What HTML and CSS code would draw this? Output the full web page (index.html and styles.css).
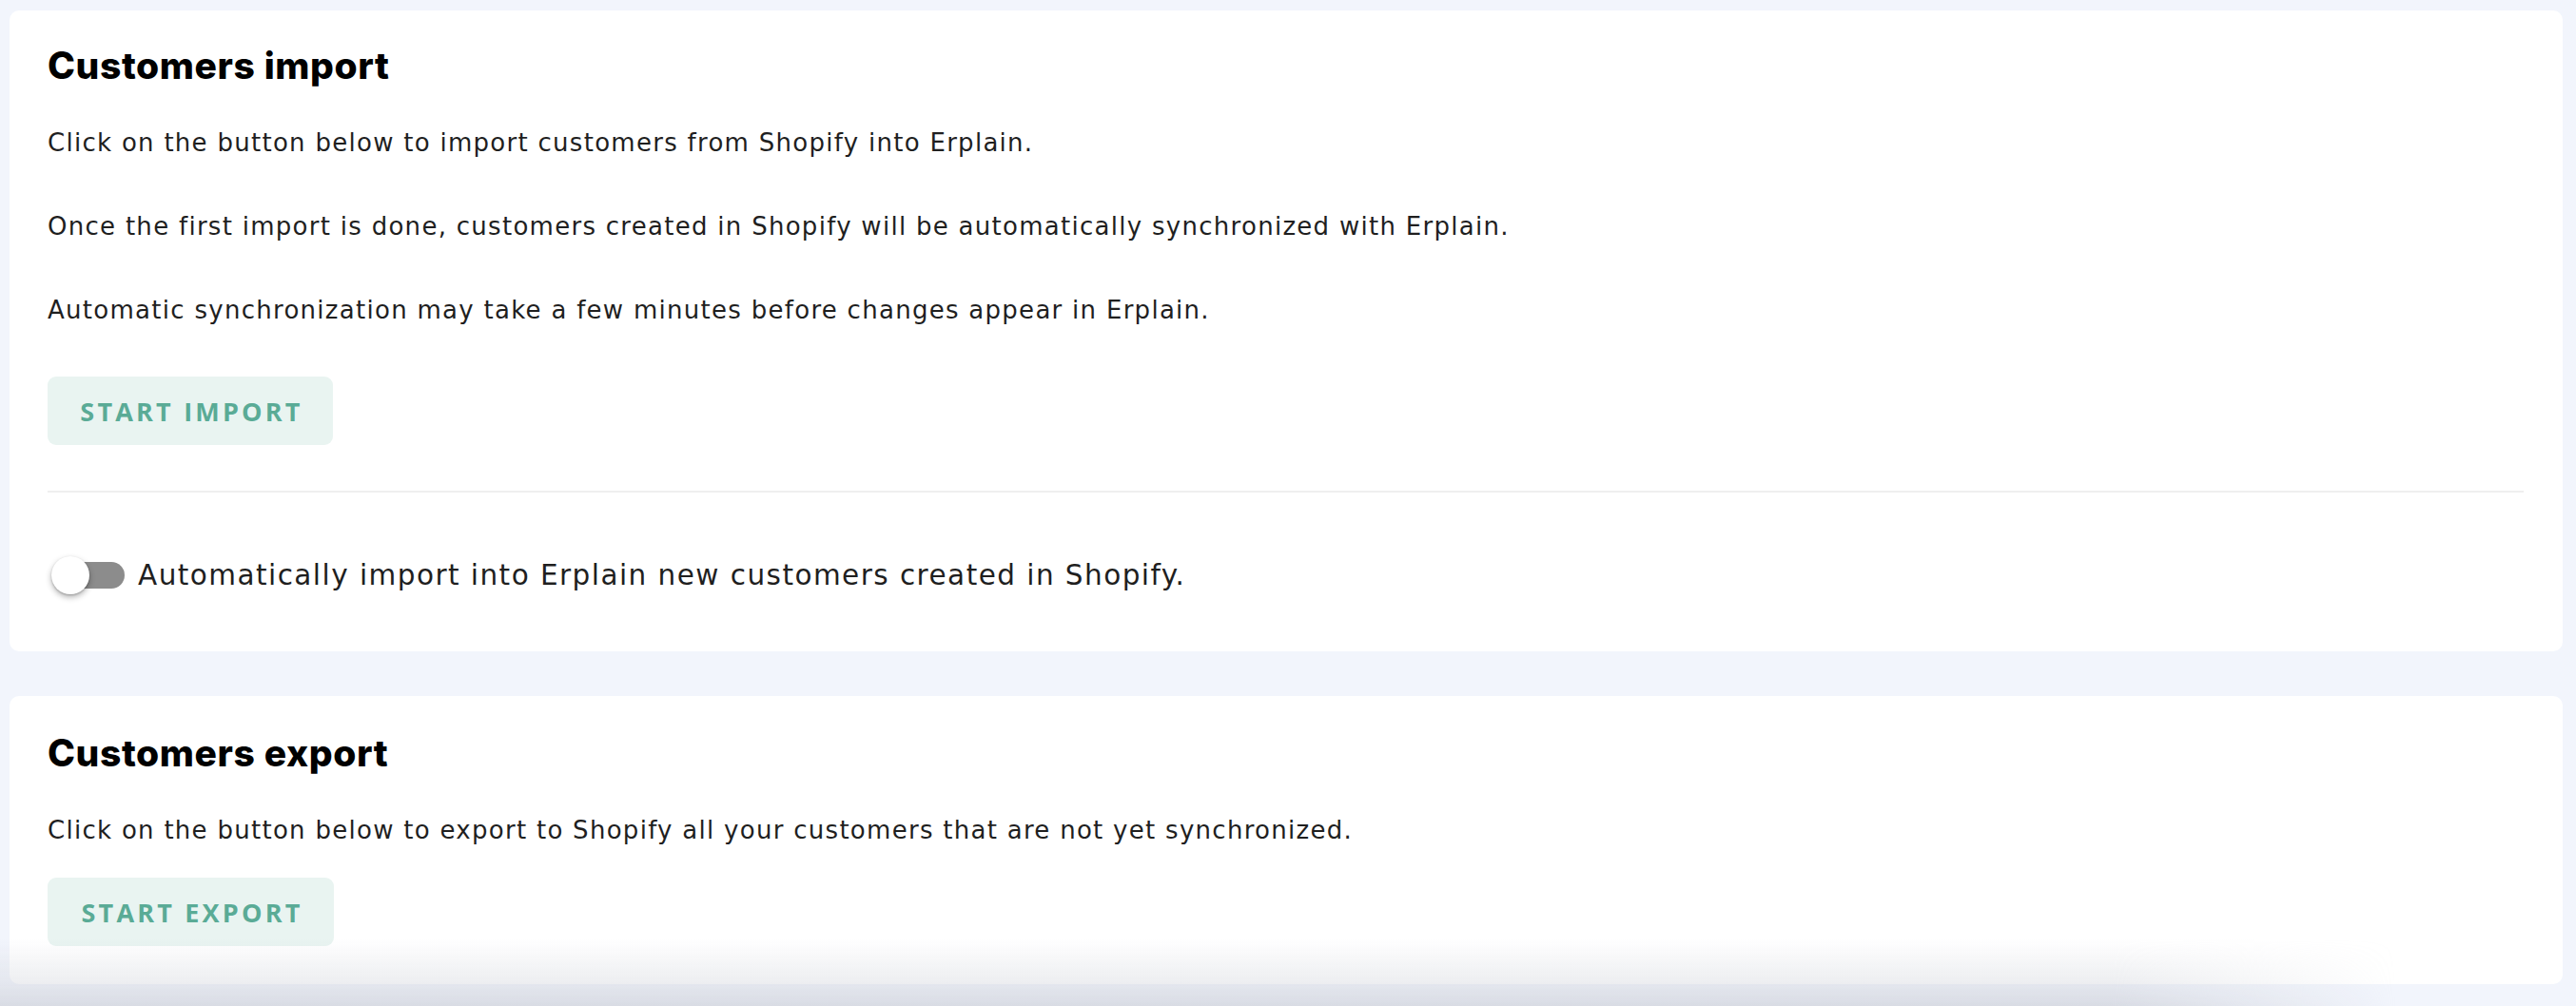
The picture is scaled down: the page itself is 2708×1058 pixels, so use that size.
FILE: index.html
```html
<!DOCTYPE html>
<html lang="en">
<head>
<meta charset="utf-8">
<title>Customers sync</title>
<link rel="stylesheet" href="styles.css">
</head>
<body>
<main class="page">
  <section class="card card-import">
    <h2 class="card-title">Customers import</h2>
    <p class="text text-first">Click on the button below to import customers from Shopify into Erplain.</p>
    <p class="text">Once the first import is done, customers created in Shopify will be automatically synchronized with Erplain.</p>
    <p class="text">Automatic synchronization may take a few minutes before changes appear in Erplain.</p>
    <button class="btn" type="button">START IMPORT</button>
    <hr class="divider">
    <label class="toggle-row">
      <span class="switch"><span class="track"></span><span class="knob"></span></span>
      <span class="toggle-label">Automatically import into Erplain new customers created in Shopify.</span>
    </label>
  </section>
  <section class="card card-export">
    <h2 class="card-title">Customers export</h2>
    <p class="text text-first">Click on the button below to export to Shopify all your customers that are not yet synchronized.</p>
    <button class="btn btn-export" type="button">START EXPORT</button>
  </section>
</main>
<div class="bottom-fade"></div>
</body>
</html>
```
FILE: styles.css
```css
html, body {
  margin: 0;
  padding: 0;
  height: 100%;
  overflow: hidden;
}
body {
  background: #f2f5fc;
  font-family: "DejaVu Sans", "Liberation Sans", sans-serif;
  color: #222;
}
.page {
  display: flex;
  flex-direction: column;
  gap: 47px;
  padding: 11px 14px 0 10px;
}
.card {
  background: #fff;
  border-radius: 10px;
  display: flex;
  flex-direction: column;
  align-items: flex-start;
  padding: 34px 41px 60px 40px;
}
.card-export {
  padding-top: 36px;
  padding-bottom: 40px;
}
.card-title {
  margin: 0 0 37px 0;
  font-family: Inter, Roboto, "Liberation Sans", sans-serif;
  font-weight: 800;
  font-size: 39px;
  line-height: 48px;
  color: #000;
  letter-spacing: 0.6px;
}
.card-export .card-title {
  margin-bottom: 37px;
}
.text {
  margin: 48px 0 0 0;
  font-size: 26px;
  line-height: 40px;
  letter-spacing: 1.28px;
  color: #1f1f1f;
}
.text.text-first {
  margin-top: 0;
}
.btn {
  margin: 50px 0 0 0;
  width: 300px;
  height: 72px;
  border: none;
  border-radius: 9px;
  background: #e9f4f1;
  color: #5aab96;
  font-family: "Open Sans", "Liberation Sans", sans-serif;
  font-weight: 700;
  font-size: 27px;
  letter-spacing: 3.2px;
  padding: 0 0 0 3px;
}
.btn-export {
  margin-top: 30px;
  width: 301px;
}
.divider {
  align-self: stretch;
  margin: 48px 0 0 0;
  border: none;
  height: 2px;
  background: #efefef;
}
.toggle-row {
  display: flex;
  align-items: center;
  margin: 67px 0 0 4px;
  height: 40px;
}
.switch {
  position: relative;
  width: 77px;
  height: 40px;
  flex: none;
}
.track {
  position: absolute;
  left: 6px;
  top: 6px;
  width: 71px;
  height: 28px;
  border-radius: 14px;
  background: #8c8c8c;
}
.knob {
  position: absolute;
  left: 0;
  top: 0;
  width: 40px;
  height: 40px;
  border-radius: 50%;
  background: #fff;
  box-shadow: 0 3px 6px rgba(0,0,0,0.3), 0 1px 2px rgba(0,0,0,0.2);
}
.toggle-label {
  margin-left: 14px;
  font-size: 29.5px;
  line-height: 40px;
  letter-spacing: 1.45px;
  color: #1f1f1f;
}
.bottom-fade {
  position: fixed;
  left: 0;
  right: 0;
  bottom: 0;
  height: 70px;
  pointer-events: none;
  background: linear-gradient(to bottom, rgba(200,203,212,0) 0%, rgba(200,203,212,0.35) 68%, rgba(200,203,212,0.6) 100%);
  -webkit-mask-image: linear-gradient(to right, #000 0%, #000 82%, transparent 93%);
  mask-image: linear-gradient(to right, #000 0%, #000 82%, transparent 93%);
}
```
